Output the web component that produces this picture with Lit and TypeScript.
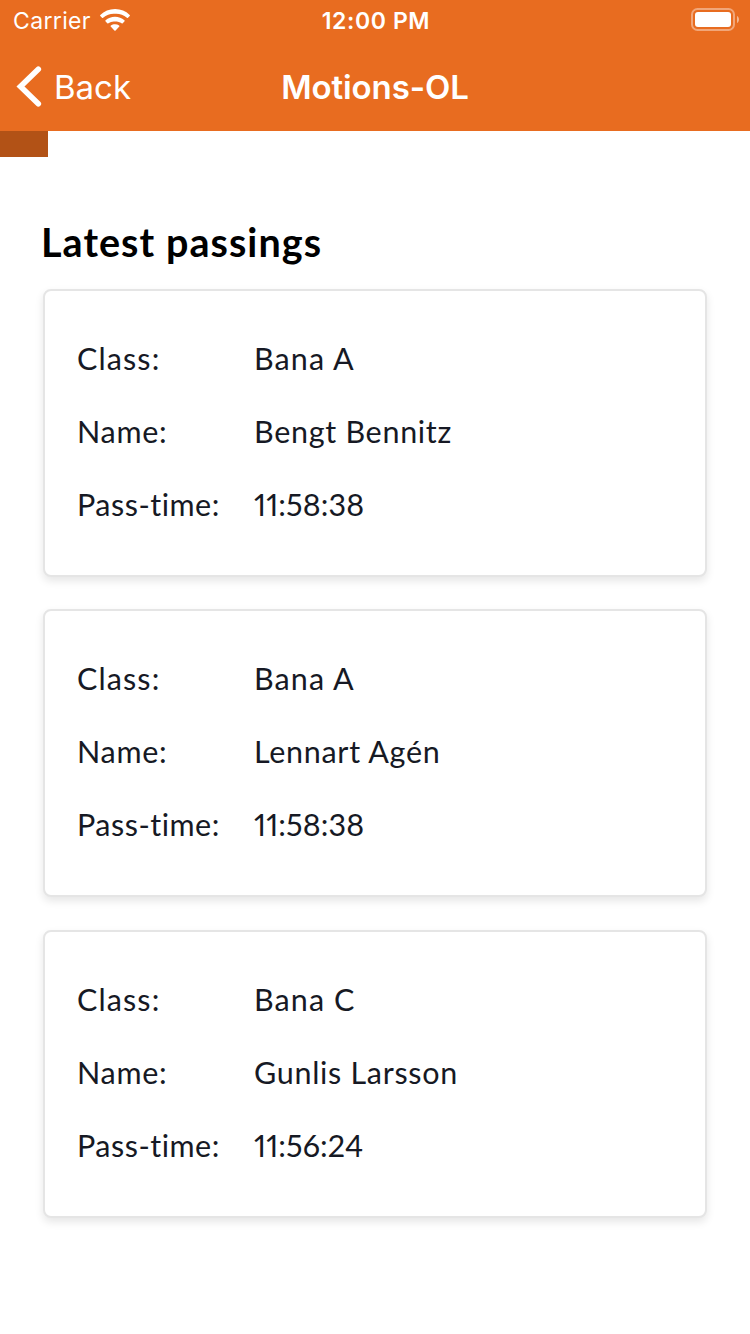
import { LitElement, html, css } from "lit";
import { customElement, property } from "lit/decorators.js";

interface Passing {
  className: string;
  name: string;
  time: string;
}

const passings: Passing[] = [
  { className: "Bana A", name: "Bengt Bennitz", time: "11:58:38" },
  { className: "Bana A", name: "Lennart Agén", time: "11:58:38" },
  { className: "Bana C", name: "Gunlis Larsson", time: "11:56:24" },
];

@customElement("status-bar")
class StatusBar extends LitElement {
  static styles = css`
    :host {
      display: grid;
      grid-template-columns: 1fr auto 1fr;
      align-items: center;
      height: 40px;
      padding: 0 11px 0 13px;
      box-sizing: border-box;
      color: #fff;
      font: 400 23px/38px Inter, sans-serif;
    }
    .carrier {
      display: flex;
      align-items: center;
      gap: 9px;
      letter-spacing: 0.35px;
    }
    .carrier span,
    .clock {
      padding-top: 2px;
    }
    .clock {
      font-weight: 600;
      letter-spacing: 0.6px;
    }
    .battery {
      justify-self: end;
    }
    svg {
      display: block;
    }
  `;
  render() {
    return html`
      <div class="carrier">
        <span>Carrier</span>
        <svg width="30" height="22" viewBox="0 0 30 22" fill="#fff">
          <path d="M15 0C9.300 0 4.100 2.200.300 5.900a.8.8 0 0 0 0 1.100l1.700 1.700a.8.8 0 0 0 1.100 0A17 17 0 0 1 15 4.800a17 17 0 0 1 11.900 3.900.8.8 0 0 0 1.100 0l1.700-1.700a.8.8 0 0 0 0-1.100A21 21 0 0 0 15 0z"/>
          <path d="M15 7.700c-3.600 0-6.900 1.400-9.400 3.600a.8.8 0 0 0 0 1.200l1.700 1.700a.8.8 0 0 0 1.100 0A9.800 9.800 0 0 1 15 12.600c2.500 0 4.900.500 6.600 1.600a.8.8 0 0 0 1.100 0l1.700-1.700a.8.8 0 0 0 0-1.200A14 14 0 0 0 15 7.700z"/>
          <path d="M15 15.200c-1.600 0-3 .5-4.100 1.400a.8.8 0 0 0 0 1.200l3.500 3.700a.8.8 0 0 0 1.200 0l3.500-3.700a.8.8 0 0 0 0-1.200A6.500 6.500 0 0 0 15 15.200z"/>
        </svg>
      </div>
      <div class="clock">12:00 PM</div>
      <svg class="battery" width="48" height="24" viewBox="0 0 48 24">
        <rect x="1" y="1" width="42" height="21" rx="5.500" fill="none" stroke="#fff" stroke-opacity=".4" stroke-width="2"/>
        <rect x="4" y="4" width="36" height="15" rx="3" fill="#fff"/>
        <path d="M46 8c1.400.600 2 2 2 3.500S47.400 14.400 46 15z" fill="#fff" fill-opacity=".5"/>
      </svg>
    `;
  }
}

@customElement("nav-bar")
class NavBar extends LitElement {
  static styles = css`
    :host {
      display: grid;
      grid-template-columns: 1fr auto 1fr;
      align-items: center;
      height: 91px;
      padding: 3px 16px 0;
      box-sizing: border-box;
      color: #fff;
      font: 400 33px/44px Inter, sans-serif;
    }
    .back {
      display: flex;
      align-items: center;
      gap: 12px;
    }
    .title {
      font-weight: 600;
      letter-spacing: -0.1px;
    }
    svg {
      display: block;
    }
  `;
  render() {
    return html`
      <div class="back">
        <svg width="26" height="42" viewBox="0 0 26 42">
          <path d="M22.300 3.300 4.500 20.500l17.800 17.200" fill="none" stroke="#fff" stroke-width="5.600" stroke-linecap="round" stroke-linejoin="miter"/>
        </svg>
        <span>Back</span>
      </div>
      <div class="title">Motions-OL</div>
    `;
  }
}

@customElement("passing-card")
class PassingCard extends LitElement {
  @property({ attribute: false }) passing!: Passing;

  static styles = css`
    :host {
      display: block;
      height: 288px;
      box-sizing: border-box;
      border: 2px solid #e5e5e5;
      border-radius: 8px;
      padding: 31px 32px 0;
      background: #fff;
      box-shadow: 0 4px 8px rgba(0, 0, 0, 0.1);
      color: #161924;
      font: 400 30.500px/73px Lato, sans-serif;
      font-variant-ligatures: none;
    }
    .row {
      display: grid;
      grid-template-columns: 177px 1fr;
      height: 73px;
      white-space: nowrap;
      letter-spacing: 0.700px;
    }
    .class {
      letter-spacing: 1.100px;
    }
    .pass .label {
      letter-spacing: 0.500px;
    }
    .time {
      font-variant-numeric: proportional-nums;
      letter-spacing: 0.100px;
    }
  `;
  render() {
    const { className, name, time } = this.passing;
    return html`
      <div class="row class"><span>Class:</span><span>${className}</span></div>
      <div class="row"><span>Name:</span><span>${name}</span></div>
      <div class="row pass"><span class="label">Pass-time:</span><span class="time">${time}</span></div>
    `;
  }
}

@customElement("app-root")
class AppRoot extends LitElement {
  static styles = css`
    :host {
      display: block;
      height: 1334px;
      background: #fff;
      overflow: hidden;
    }
    header {
      height: 131px;
      background: #e86c20;
    }
    .progress {
      width: 48px;
      height: 26px;
      background: #b25216;
    }
    main {
      padding: 60px 43px 0;
    }
    h1 {
      margin: 0 0 0 -2px;
      height: 72px;
      color: #000;
      font: 700 39.500px/50px Lato, sans-serif;
      letter-spacing: 1.050px;
    }
    .list {
      display: grid;
      gap: 32.400px;
    }
  `;
  render() {
    return html`
      <header>
        <status-bar></status-bar>
        <nav-bar></nav-bar>
      </header>
      <div class="progress"></div>
      <main>
        <h1>Latest passings</h1>
        <div class="list">
          ${passings.map((p) => html`<passing-card .passing=${p}></passing-card>`)}
        </div>
      </main>
    `;
  }
}
